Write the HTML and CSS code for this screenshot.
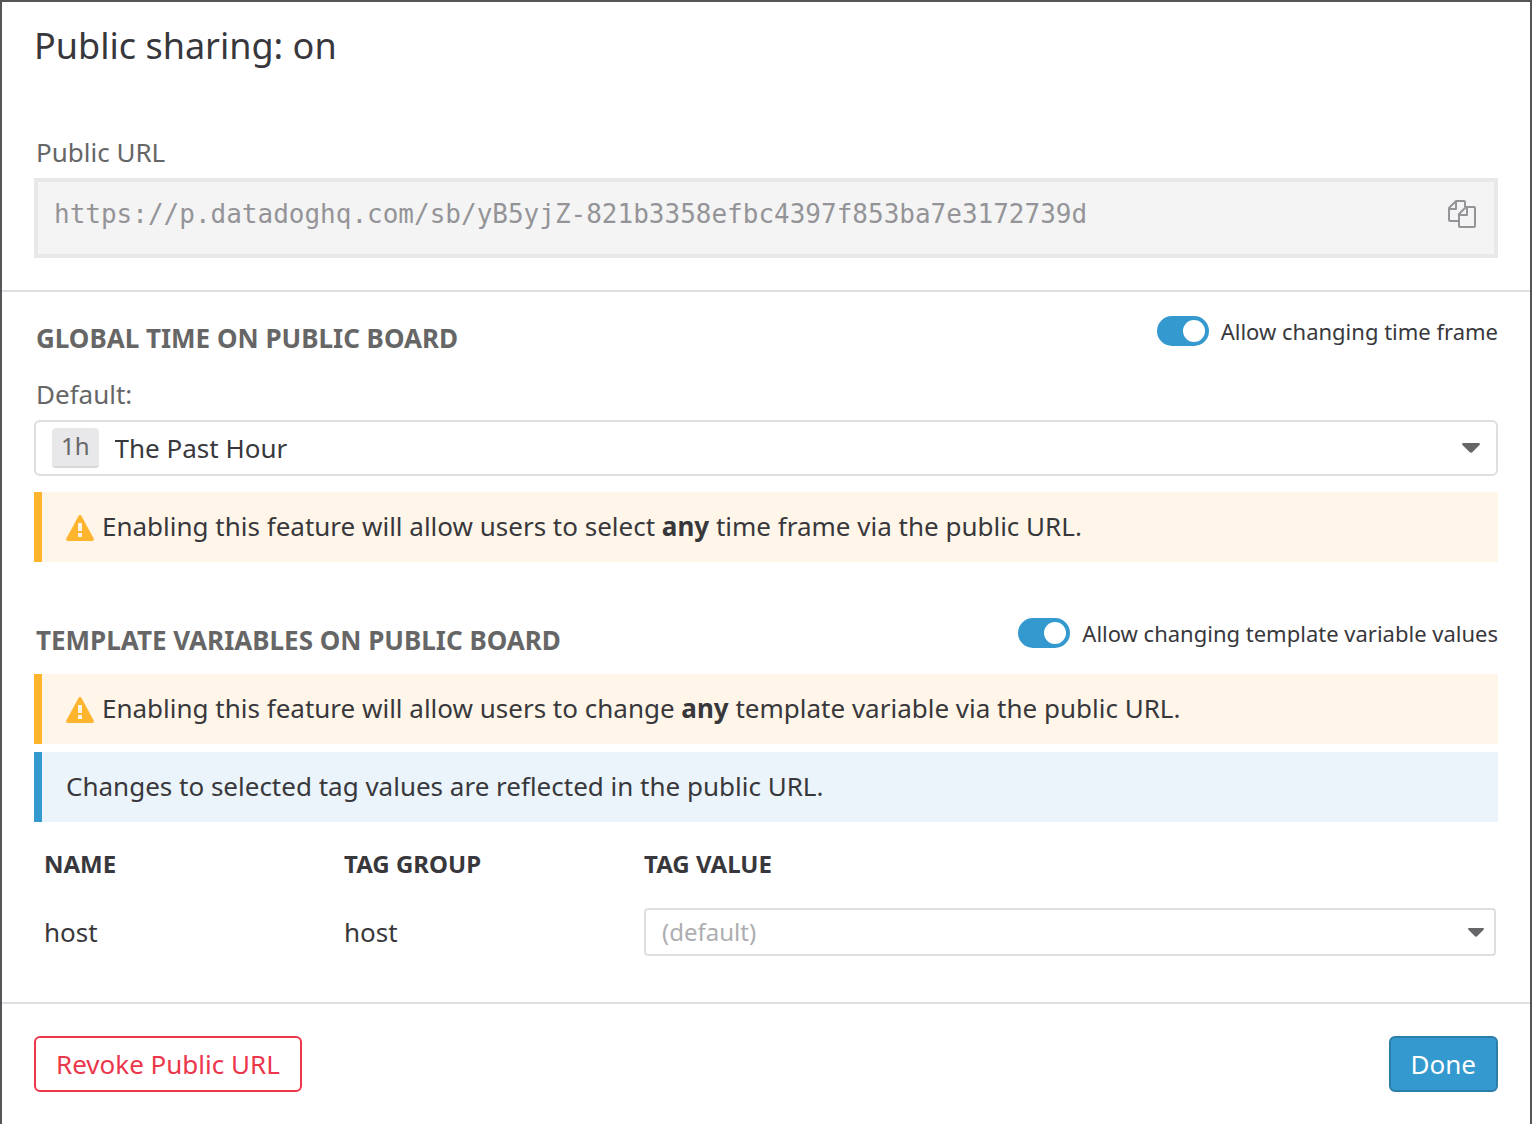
FILE: index.html
```html
<!DOCTYPE html>
<html lang="en">
<head>
<meta charset="utf-8">
<meta name="viewport" content="width=device-width, initial-scale=1">
<title>Public sharing</title>
<link rel="stylesheet" href="styles.css">
</head>
<body>
<main class="modal">
  <section class="share">
    <h1 class="title">Public sharing: on</h1>
    <label class="label" for="public-url">Public URL</label>
    <div class="url-box">
      <input class="url-input" id="public-url" type="text" readonly value="https://p.datadoghq.com/sb/yB5yjZ-821b3358efbc4397f853ba7e3172739d">
      <button class="copy" type="button" aria-label="Copy URL">
        <svg width="28" height="28" viewBox="0 0 28 28" fill="none" stroke="currentColor" stroke-width="2" stroke-linejoin="round">
          <path d="M17 7V2Q17 1 16 1H8L1 8V20Q1 21 2 21H10M8 1V9H1"/>
          <path d="M18 7H26Q27 7 27 8V26Q27 27 26 27H12Q11 27 11 26V14ZM19 7V15H11"/>
        </svg>
      </button>
    </div>
  </section>

  <section class="settings">
    <div class="section-head">
      <h2 class="heading">GLOBAL TIME ON PUBLIC BOARD</h2>
      <label class="toggle"><input class="switch" type="checkbox" role="switch" checked>Allow changing time frame</label>
    </div>
    <label class="label label-default" for="time-frame">Default:</label>
    <div class="select-box">
      <span class="badge">1h</span>
      <select class="select" id="time-frame"><option>The Past Hour</option></select>
      <svg class="caret" width="18" height="10" viewBox="0 0 18 10" fill="currentColor"><path d="M1 0H17Q18.500 .5 17.500 2L10.500 9Q9 10.500 7.500 9L.5 2Q-.5 .5 1 0Z"/></svg>
    </div>
    <p class="alert alert-warning">
      <svg class="warn-icon" width="28" height="26" viewBox="0 0 28 26"><path fill="#ffb42e" d="M12.500 1Q14-1 15.500 1L27.700 23.500Q28.500 26 26 26H2Q-.5 26 .3 23.500Z"/><path fill="#fff6e9" d="M12 8H16V16H12ZM12 18H16V22H12Z"/></svg>
      <span>Enabling this feature will allow users to select <strong>any</strong> time frame via the public URL.</span>
    </p>

    <div class="section-head section-variables">
      <h2 class="heading">TEMPLATE VARIABLES ON PUBLIC BOARD</h2>
      <label class="toggle"><input class="switch" type="checkbox" role="switch" checked>Allow changing template variable values</label>
    </div>
    <p class="alert alert-warning">
      <svg class="warn-icon" width="28" height="26" viewBox="0 0 28 26"><path fill="#ffb42e" d="M12.500 1Q14-1 15.500 1L27.700 23.500Q28.500 26 26 26H2Q-.5 26 .3 23.500Z"/><path fill="#fff6e9" d="M12 8H16V16H12ZM12 18H16V22H12Z"/></svg>
      <span>Enabling this feature will allow users to change <strong>any</strong> template variable via the public URL.</span>
    </p>
    <p class="alert alert-info">Changes to selected tag values are reflected in the public URL.</p>

    <div class="table-wrap">
      <table class="variables">
        <thead>
          <tr><th class="col-narrow" scope="col">NAME</th><th class="col-narrow" scope="col">TAG GROUP</th><th scope="col">TAG VALUE</th></tr>
        </thead>
        <tbody>
          <tr>
            <td>host</td>
            <td>host</td>
            <td class="cell-value">
              <div class="select-box select-small">
                <select class="select" aria-label="Tag value for host"><option>(default)</option></select>
                <svg class="caret" width="16" height="9" viewBox="0 0 18 10" fill="currentColor"><path d="M1 0H17Q18.500 .5 17.500 2L10.500 9Q9 10.500 7.500 9L.5 2Q-.5 .5 1 0Z"/></svg>
              </div>
            </td>
          </tr>
        </tbody>
      </table>
    </div>
  </section>

  <footer class="footer">
    <button class="button button-danger" type="button">Revoke Public URL</button>
    <button class="button button-primary" type="button">Done</button>
  </footer>
</main>
</body>
</html>
```
FILE: styles.css
```css
* {
  box-sizing: border-box;
}

body {
  margin: 0;
  background: #555557;
  color: #38383c;
  font: 26px/36px "Noto Sans", "Open Sans", sans-serif;
}

h1, h2, p {
  margin: 0;
}

button, input, select {
  margin: 0;
  font: inherit;
  color: inherit;
}

.modal {
  min-height: calc(100vh - 2px);
  margin: 2px 2px 0;
  background: #fff;
}

.share {
  padding: 20px 32px 32px;
  border-bottom: 2px solid #dedee3;
}

.title {
  margin-bottom: 64px;
  font-size: 36px;
  line-height: 48px;
  font-weight: 400;
}

.label {
  display: block;
  margin: 0 2px 8px;
  color: #666;
}

.url-box {
  display: flex;
  align-items: center;
  height: 80px;
  padding: 0 18px 8px 16px;
  border: 4px solid #e8e8ea;
  background: #f4f4f4;
}

.url-input {
  flex: 1;
  min-width: 0;
  padding: 0;
  border: 0;
  outline: 0;
  background: transparent;
  color: #949498;
  font-family: "DejaVu Sans Mono", monospace;
}

.copy {
  display: flex;
  padding: 0;
  border: 0;
  background: none;
  color: #949498;
}

.settings {
  padding: 24px 32px 46px;
  border-bottom: 2px solid #dedee3;
}

.section-head {
  display: flex;
  justify-content: space-between;
  align-items: flex-start;
}

.section-variables {
  margin: 56px 0 16px;
}

.heading {
  padding: 4px 2px 0;
  font-size: 26px;
  line-height: 36px;
  font-weight: 700;
  color: #666;
}

.toggle {
  display: flex;
  align-items: center;
  gap: 12px;
  font-size: 22px;
  line-height: 30px;
}

.switch {
  display: flex;
  justify-content: flex-end;
  align-items: center;
  width: 52px;
  height: 30px;
  padding: 4px;
  border-radius: 15px;
  background: #3399ce;
  appearance: none;
}

.switch::before {
  content: "";
  width: 22px;
  height: 22px;
  border-radius: 50%;
  background: #fff;
}

.switch:not(:checked) {
  justify-content: flex-start;
  background: #949498;
}

.label-default {
  margin-top: 20px;
}

.select-box {
  display: flex;
  align-items: center;
  height: 56px;
  padding: 0 16px;
  border: 2px solid #dedee3;
  border-radius: 6px;
  background: #fff;
}

.badge {
  height: 40px;
  margin-right: 16px;
  padding: 0 9px;
  border-bottom: 2px solid #d7d7d9;
  border-radius: 4px;
  background: #e8e8ea;
  color: #666;
  font-size: 24px;
}

.select {
  flex: 1;
  min-width: 0;
  padding: 0;
  border: 0;
  background: transparent;
  appearance: none;
}

.caret {
  color: #666669;
}

.alert {
  display: flex;
  padding: 16px 24px 18px;
  border-left: 8px solid;
}

.alert-warning {
  gap: 8px;
  border-color: #ffb42e;
  background: #fff6e9;
}

.select-box + .alert {
  margin-top: 16px;
}

.warn-icon {
  flex: none;
  margin-top: 7px;
}

.alert-info {
  margin-top: 8px;
  border-color: #3399ce;
  background: #ebf4fa;
}

.table-wrap {
  padding: 26px 2px 0;
}

.variables {
  width: 100%;
  table-layout: fixed;
  border-collapse: collapse;
}

.variables th {
  padding: 0 8px 28px;
  font-size: 24px;
  line-height: 32px;
  font-weight: 700;
  text-align: left;
}

.variables td {
  padding: 0 8px;
}

.variables .cell-value {
  padding-right: 0;
}

.col-narrow {
  width: 300px;
}

.select-small {
  height: 48px;
  padding: 0 10px 0 16px;
  border-radius: 4px;
  color: #adadb1;
  font-size: 24px;
  line-height: 32px;
}

.footer {
  display: flex;
  justify-content: space-between;
  padding: 32px;
}

.button {
  height: 56px;
  padding: 0 20px;
  border: 2px solid;
  border-radius: 6px;
}

.button-danger {
  border-color: #eb364b;
  background: #fff;
  color: #eb364b;
}

.button-primary {
  border-color: #2a7ea9;
  background: #3399ce;
  color: #fff;
}
```
